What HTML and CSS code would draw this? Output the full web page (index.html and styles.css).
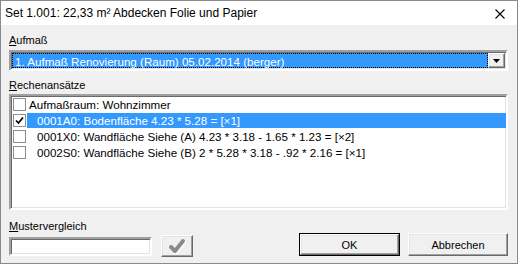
FILE: index.html
```html
<!DOCTYPE html>
<html lang="de">
<head>
  <meta charset="UTF-8" />
  <title>Set 1.001</title>
  <link rel="stylesheet" href="styles.css">
</head>
<body>
  <div class="window">
    <div class="titlebar">
      <span class="title">Set 1.001: 22,33 m² Abdecken Folie und Papier</span>
      <svg class="close" width="10" height="10" viewBox="0 0 10 10">
        <path d="M0.5 0.5 L9.5 9.5 M9.5 0.5 L0.5 9.5" stroke="#000" stroke-width="1.1" fill="none"/>
      </svg>
    </div>

    <div class="content">
      <div class="label"><u>A</u>ufmaß</div>
      <div class="combo sunken">
        <div class="combo-value">
          <span class="focus">1. Aufmaß Renovierung (Raum) 05.02.2014 (berger)</span>
        </div>
        <div class="combo-btn raised">
          <svg width="7" height="4" viewBox="0 0 7 4"><path d="M0 0 H7 L3.5 4 Z" fill="#000"/></svg>
        </div>
      </div>

      <div class="label label-gap"><u>R</u>echenansätze</div>
      <div class="list sunken">
        <div class="row">
          <span class="check"></span>
          <span class="row-text">Aufmaßraum: Wohnzimmer</span>
        </div>
        <div class="row indent">
          <span class="check">
            <svg width="11" height="11" viewBox="0 0 11 11"><path d="M2 5.5 L4.5 8 L9 2.5" stroke="#000" stroke-width="1.7" fill="none"/></svg>
          </span>
          <span class="row-text selected">0001A0: Bodenfläche 4.23 * 5.28 = [×1]</span>
        </div>
        <div class="row indent">
          <span class="check"></span>
          <span class="row-text">0001X0: Wandfläche Siehe (A) 4.23 * 3.18 - 1.65 * 1.23 = [×2]</span>
        </div>
        <div class="row indent">
          <span class="check"></span>
          <span class="row-text">0002S0: Wandfläche Siehe (B) 2 * 5.28 * 3.18 - .92 * 2.16 = [×1]</span>
        </div>
      </div>

      <div class="footer">
        <div class="filter">
          <div class="label"><u>M</u>ustervergleich</div>
          <div class="filter-row">
            <div class="input sunken"></div>
            <div class="icon-btn raised">
              <svg width="20" height="18" viewBox="0 0 20 18">
                <path d="M4 10 L8 14 L16 4" stroke="#fff" stroke-width="4" fill="none" stroke-linecap="round" stroke-linejoin="round" transform="translate(1 1)"/>
                <path d="M4 10 L8 14 L16 4" stroke="#8a8a8a" stroke-width="4" fill="none" stroke-linecap="round" stroke-linejoin="round"/>
              </svg>
            </div>
          </div>
        </div>
        <div class="buttons">
          <div class="btn default"><span class="raised btn-face">OK</span></div>
          <div class="btn"><span class="raised btn-face">Abbrechen</span></div>
        </div>
      </div>
    </div>
  </div>
</body>
</html>
```

FILE: styles.css
```css
* { box-sizing: border-box; }

body {
  margin: 0;
  background: #f0f0f0;
  font-family: 'Liberation Sans', Arial, sans-serif;
  font-size: 11px;
  color: #000;
}

.window {
  width: 518px;
  height: 264px;
  border: 1px solid #8a8a8a;
  background: #f0f0f0;
  display: flex;
  flex-direction: column;
}

.titlebar {
  height: 24px;
  background: #fff;
  display: flex;
  align-items: center;
  justify-content: space-between;
  padding: 0 12px 0 4px;
}

.title {
  font-size: 12px;
}

.close {
  margin-top: 1px;
}

.content {
  flex: 1;
  padding: 8px 9px 0 8px;
  display: flex;
  flex-direction: column;
}

.label {
  height: 14px;
  line-height: 14px;
  margin-bottom: 3px;
}

.label u { text-decoration-thickness: 1px; text-underline-offset: 1px; }

.label-gap {
  margin-top: 7px;
  margin-bottom: 2px;
}

/* classic 3d borders */
.sunken {
  border: 2px solid;
  border-color: #a0a0a0 #ffffff #ffffff #a0a0a0;
  box-shadow: inset 1px 1px 0 #696969, inset -1px -1px 0 #e3e3e3;
}

.raised {
  border: 1px solid;
  border-color: #ffffff #696969 #696969 #ffffff;
  box-shadow: inset -1px -1px 0 #a0a0a0, inset 1px 1px 0 #e3e3e3;
  background: #f0f0f0;
}

.combo {
  height: 21px;
  display: flex;
  background: #fff;
  padding: 1px;
}

.combo-value {
  flex: 1;
  background: #3399ff;
}

.focus {
  display: block;
  height: 100%;
  border: 1px dotted #000;
  color: #fff;
  line-height: 15px;
  padding-left: 2px;
  font-size: 11.6px;
}

.combo-btn {
  width: 17px;
  display: flex;
  align-items: center;
  justify-content: center;
}

.list {
  height: 116px;
  background: #fff;
  padding: 1px 0 0 2px;
}

.row {
  height: 15px;
  display: flex;
  align-items: center;
  margin-top: 1px;
}

.row:first-child { margin-top: 0; }

.check {
  width: 13px;
  height: 13px;
  border: 1px solid #8e8f8f;
  background: #fff;
  flex: none;
  display: flex;
  align-items: center;
  justify-content: center;
}

.row-text {
  margin-left: 1px;
  padding-left: 2px;
  line-height: 15px;
  height: 15px;
  font-size: 11.6px;
}

.indent .row-text {
  padding-left: 10px;
}

.selected {
  flex: 1;
  background: #3399ff;
  color: #fff;
}

.footer {
  margin-top: 9px;
  display: flex;
  justify-content: space-between;
  align-items: flex-end;
}

.filter .label {
  margin-bottom: 2px;
}

.filter-row {
  display: flex;
  align-items: center;
  gap: 9px;
}

.input {
  width: 143px;
  height: 19px;
  background: #fff;
}

.icon-btn {
  width: 32px;
  height: 22px;
  display: flex;
  align-items: center;
  justify-content: center;
}

.buttons {
  display: flex;
  gap: 8px;
  margin-bottom: 1px;
}

.btn {
  width: 100px;
  height: 23px;
  display: flex;
}

.btn.default {
  width: 101px;
  border: 1px solid #000;
}

.btn-face {
  flex: 1;
  display: flex;
  align-items: center;
  justify-content: center;
}
```
